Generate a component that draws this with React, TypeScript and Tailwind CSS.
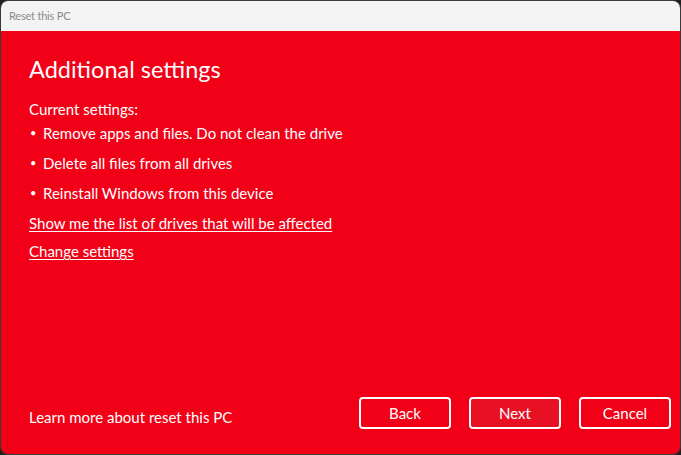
export default function App() {
  const items = [
    'Remove apps and files. Do not clean the drive',
    'Delete all files from all drives',
    'Reinstall Windows from this device',
  ]
  return (
    <div className="w-[681px] h-[455px] bg-[#202020] font-['Lato',sans-serif]">
      <div className="flex flex-col h-full rounded-lg overflow-hidden border border-[#3a3a3a]">
        {/* Title bar */}
        <div className="h-[30px] shrink-0 bg-[#f3f3f3] flex items-center pl-[8px] text-[11px] tracking-[-0.2px] text-[#8a8a8a]">
          Reset this PC
        </div>

        {/* Body */}
        <div className="flex-1 bg-[#f20017] text-white flex flex-col px-[28px]">
          <h1 className="mt-[22px] text-[23.5px] leading-[32px] font-normal">Additional settings</h1>
          <p className="mt-[14px] text-[15px] leading-[20px]">Current settings:</p>
          <ul className="mt-[4px] flex flex-col gap-[10px] text-[15px] leading-[20px]">
            {items.map((t) => (
              <li key={t} className="flex">
                <span className="w-[14px] shrink-0 text-[11px] pl-[1px]">•</span>
                <span>{t}</span>
              </li>
            ))}
          </ul>
          <a className="mt-[10px] text-[15px] leading-[20px] underline underline-offset-2 w-fit">
            Show me the list of drives that will be affected
          </a>
          <a className="mt-[8px] text-[15px] leading-[20px] underline underline-offset-2 w-fit">
            Change settings
          </a>

          <div className="mt-auto mb-[25px] flex items-center">
            <span className="mt-[7px] text-[15px] leading-[20px]">Learn more about reset this PC</span>
            <div className="ml-auto flex gap-[18px] -mr-[19px]">
              <button className="w-[92px] h-[32px] rounded-[4px] border-2 border-white text-[15px]">Back</button>
              <button className="w-[92px] h-[32px] rounded-[4px] border-2 border-white bg-[#e81123] text-[15px]">Next</button>
              <button className="w-[92px] h-[32px] rounded-[4px] border-2 border-white text-[15px]">Cancel</button>
            </div>
          </div>
        </div>
      </div>
    </div>
  )
}
